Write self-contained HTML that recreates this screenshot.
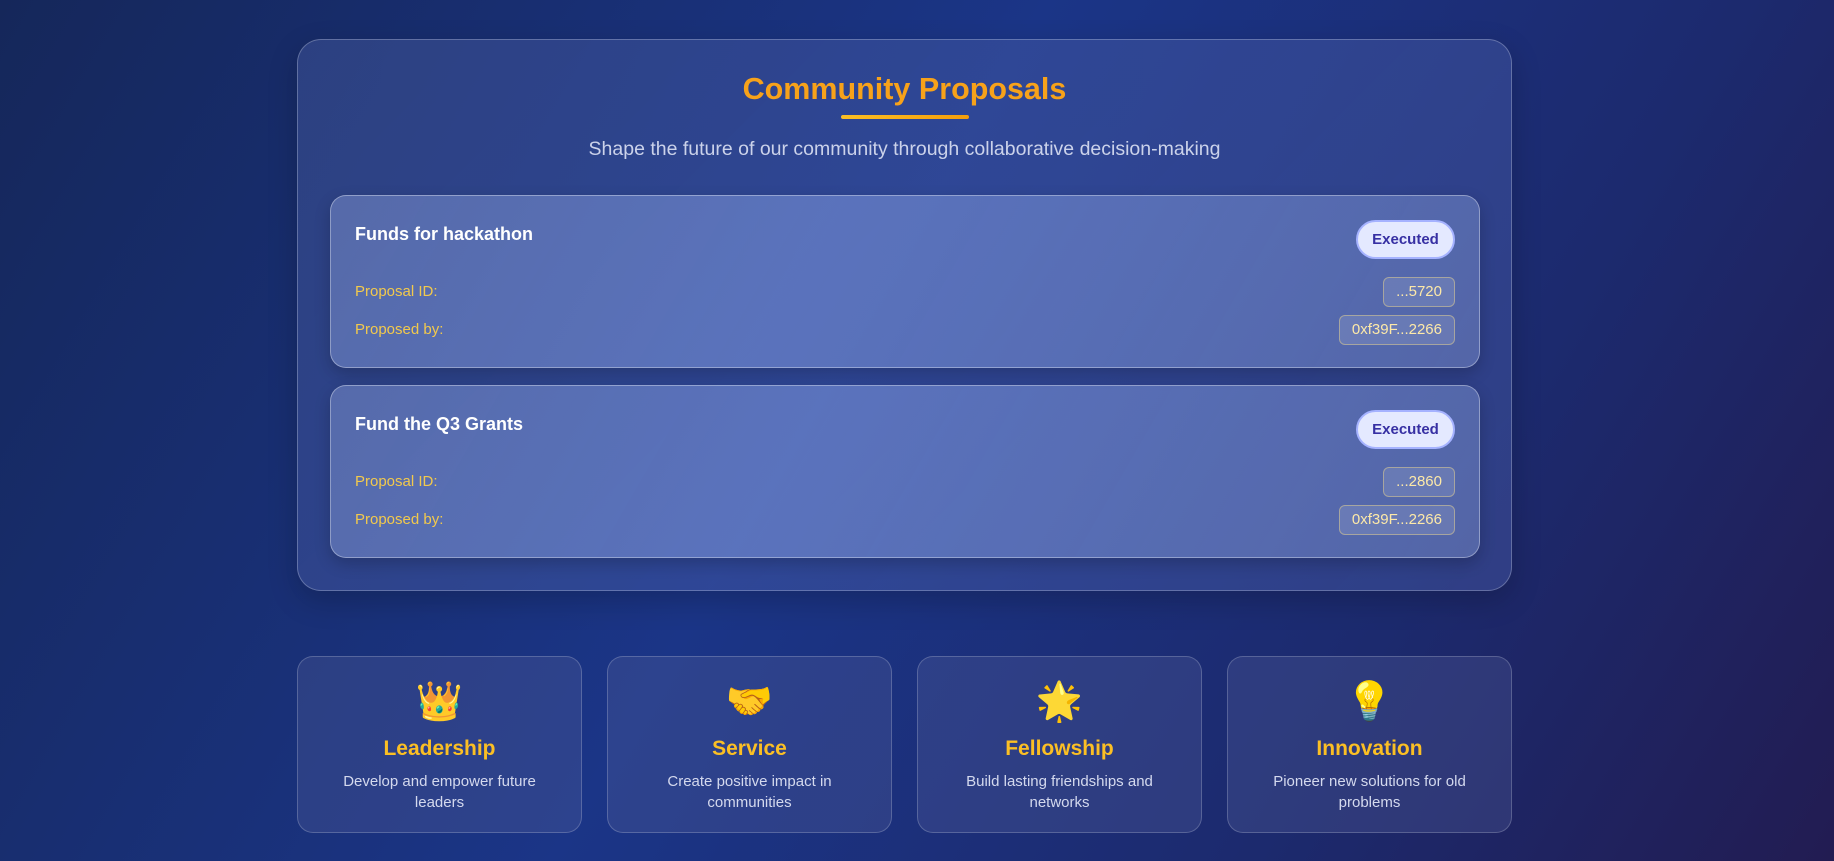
<!DOCTYPE html>
<html><head><meta charset="utf-8"><style>
*{box-sizing:border-box;margin:0;padding:0}
html,body{width:1834px;height:861px;overflow:hidden}
body{font-family:"Liberation Sans","DejaVu Sans",sans-serif;background:linear-gradient(120deg,#15275a 0%,#1b3587 45%,#1c2a6e 75%,#221c52 100%);position:relative}
.panel{position:absolute;left:297px;top:39px;width:1215px;height:552px;border-radius:24px;border:1px solid rgba(255,255,255,0.25);background:linear-gradient(135deg,rgba(80,100,170,0.38),rgba(90,110,190,0.32));box-shadow:0 10px 30px rgba(0,0,0,0.2)}
h1{position:absolute;left:297px;width:1215px;top:72px;text-align:center;font-size:30.5px;font-weight:bold;color:#f7a21a}
.ul{position:absolute;left:841px;top:115px;width:128px;height:4px;border-radius:2px;background:linear-gradient(90deg,#fbbf24,#f59e0b)}
.sub{position:absolute;left:297px;width:1215px;top:138px;text-align:center;font-size:19.5px;color:#cbd2ea}
.card{position:absolute;left:330px;width:1150px;height:173px;border-radius:16px;border:1px solid rgba(255,255,255,0.35);background:linear-gradient(120deg,rgba(120,140,200,0.55),rgba(120,145,215,0.6) 40%,rgba(120,140,200,0.5));box-shadow:0 6px 16px rgba(0,0,0,0.2)}
.ct{position:absolute;left:24px;top:28px;font-size:18px;font-weight:bold;color:#fff}
.badge{position:absolute;right:24px;top:24px;width:99px;height:39px;border-radius:20px;background:#e4e9ff;border:2px solid #a5b2ff;color:#3730a3;font-size:15px;font-weight:bold;text-align:center;line-height:35px}
.lab{position:absolute;left:24px;font-size:15px;color:#f2c94c}
.val{position:absolute;right:24px;height:30px;padding:0 12px;border-radius:6px;border:1px solid rgba(230,210,140,0.5);background:rgba(255,255,255,0.12);color:#fde9a8;font-size:15px;line-height:28px}
.f{position:absolute;top:656px;width:285px;height:177px;border-radius:16px;border:1px solid rgba(255,255,255,0.2);background:rgba(90,100,160,0.3);text-align:center}
.f .e{font-size:38px;margin-top:22px;height:46px;line-height:46px;font-family:"Noto Color Emoji","DejaVu Sans",sans-serif}
.f h3{font-size:21px;color:#fbbf24;margin-top:12px}
.f p{font-size:15px;color:#d4d9ee;line-height:21px;margin:10px 30px 0}
</style></head><body>
<div class="panel"></div>
<h1>Community Proposals</h1>
<div class="ul"></div>
<div class="sub">Shape the future of our community through collaborative decision-making</div>
<div class="card" style="top:195px">
<div class="ct">Funds for hackathon</div><div class="badge">Executed</div>
<div class="lab" style="top:87px">Proposal ID:</div><div class="val" style="top:81px">...5720</div>
<div class="lab" style="top:125px">Proposed by:</div><div class="val" style="top:119px">0xf39F...2266</div>
</div>
<div class="card" style="top:385px">
<div class="ct">Fund the Q3 Grants</div><div class="badge">Executed</div>
<div class="lab" style="top:87px">Proposal ID:</div><div class="val" style="top:81px">...2860</div>
<div class="lab" style="top:125px">Proposed by:</div><div class="val" style="top:119px">0xf39F...2266</div>
</div>
<div class="f" style="left:297px"><div class="e">👑</div><h3>Leadership</h3><p>Develop and empower future leaders</p></div>
<div class="f" style="left:607px"><div class="e">🤝</div><h3>Service</h3><p>Create positive impact in communities</p></div>
<div class="f" style="left:917px"><div class="e">🌟</div><h3>Fellowship</h3><p>Build lasting friendships and networks</p></div>
<div class="f" style="left:1227px"><div class="e">💡</div><h3>Innovation</h3><p>Pioneer new solutions for old problems</p></div>
</body></html>
